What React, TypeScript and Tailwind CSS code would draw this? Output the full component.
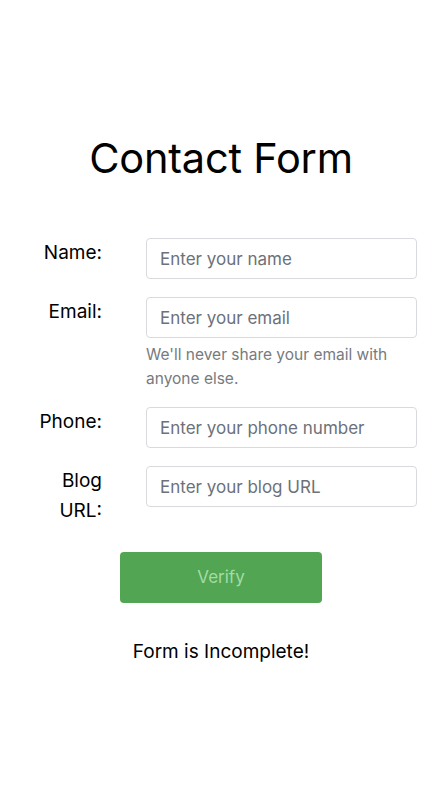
import React from "react";

const rows = [
  { label: "Name:", ph: "Enter your name" },
  { label: "Email:", ph: "Enter your email", help: "We'll never share your email with anyone else." },
  { label: "Phone:", ph: "Enter your phone number" },
  { label: "Blog URL:", ph: "Enter your blog URL" },
];

export default function App() {
  return (
    <div className="w-[442px] h-[790px] bg-white text-black font-['Inter',sans-serif]">
      <div className="pt-[130px] flex flex-col items-center">
        <h1 className="text-[41.5px] leading-[56px] font-normal tracking-[-0.2px]">Contact Form</h1>
        <div className="mt-[52px] w-full flex flex-col gap-[18px]">
          {rows.map((r) => (
            <div key={r.label} className="flex items-start">
              <label className="w-[102px] pl-[36px] text-right text-[19px] leading-[30px] text-black">{r.label}</label>
              <div className="ml-[44px] w-[271px] flex flex-col">
                <input
                  placeholder={r.ph}
                  className="h-[41px] w-full rounded-[4px] border border-[#d8dadd] px-[13px] text-[17px] text-black placeholder:text-[#6c717a] outline-none"
                />
                {r.help && (
                  <p className="mt-[5px] mb-[-2px] text-[15.5px] leading-[24px] text-[#777a7e]">{r.help}</p>
                )}
              </div>
            </div>
          ))}
        </div>
        <button className="mt-[26px] w-[202px] h-[51px] rounded-[4px] bg-[#51a553] text-[#a3dca5] text-[17px]">Verify</button>
        <p className="mt-[34px] text-[19px] leading-[30px]">Form is Incomplete!</p>
      </div>
    </div>
  );
}
